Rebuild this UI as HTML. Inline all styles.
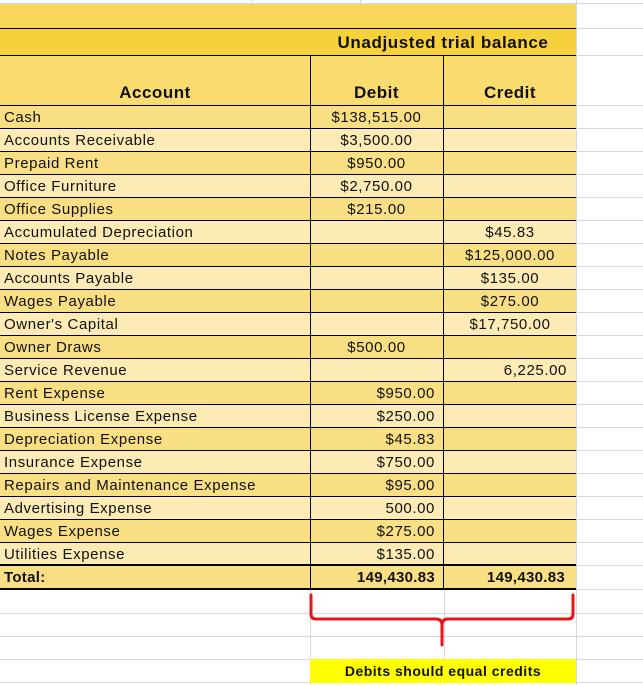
<!DOCTYPE html>
<html><head><style>
body{margin:0;width:643px;height:685px;position:relative;background:#fff;font-family:"Liberation Sans",sans-serif;overflow:hidden}
.g{position:absolute;background:#d9d9d9}
.r{position:absolute;left:0;width:576px;height:23px;font-size:15px;letter-spacing:0.6px;line-height:23px;color:#111;border-top:1px solid #000;box-sizing:border-box}
.r span{position:absolute;top:0;white-space:nowrap}
.a{left:4px}
.d{left:310px;width:133px;text-align:center}
.dr{left:310px;width:125px;text-align:right}
.c{left:444px;width:132px;text-align:center}
.cr{left:444px;width:123px;text-align:right}
.v{position:absolute;width:1px;background:#000}
</style></head><body>
<div class="g" style="left:0;top:3px;width:643px;height:1px"></div>
<div class="g" style="left:576px;top:28px;width:67px;height:1px"></div>
<div class="g" style="left:576px;top:55px;width:67px;height:1px"></div>
<div class="g" style="left:576px;top:105px;width:67px;height:1px"></div>
<div class="g" style="left:0;top:613px;width:643px;height:1px"></div>
<div class="g" style="left:0;top:636px;width:643px;height:1px"></div>
<div class="g" style="left:0;top:659px;width:643px;height:1px"></div>
<div class="g" style="left:0;top:682px;width:643px;height:1px"></div>
<div class="g" style="left:310px;top:589px;width:1px;height:96px"></div>
<div class="g" style="left:444px;top:589px;width:1px;height:96px"></div>
<div class="g" style="left:576px;top:0;width:1px;height:685px"></div>
<div class="g" style="left:251px;top:0;width:1px;height:3px"></div>
<div class="g" style="left:360px;top:0;width:1px;height:3px"></div>

<div style="position:absolute;left:0;top:4px;width:576px;height:24px;background:#f8d55b"></div>
<div style="position:absolute;left:0;top:28px;width:576px;height:27px;background:#f7d03d;border-top:1px solid #000;box-sizing:border-box"></div>
<div style="position:absolute;left:310px;top:29px;width:266px;height:26px;line-height:28px;text-align:center;font-weight:bold;font-size:17px;letter-spacing:0.6px;color:#111">Unadjusted trial balance</div>
<div style="position:absolute;left:0;top:55px;width:576px;height:50px;background:#f9db6e;border-top:1px solid #000;box-sizing:border-box;font-weight:bold;font-size:17px;letter-spacing:0.5px;color:#111">
<span style="position:absolute;left:0;width:310px;text-align:center;top:27px">Account</span>
<span style="position:absolute;left:310px;width:133px;text-align:center;top:27px">Debit</span>
<span style="position:absolute;left:444px;width:132px;text-align:center;top:27px">Credit</span>
</div>

<div class="r" style="top:105px;background:#f9df84"><span class="a">Cash</span><span class="d">$138,515.00</span></div>
<div class="r" style="top:128px;background:#fcebb4"><span class="a">Accounts Receivable</span><span class="d">$3,500.00</span></div>
<div class="r" style="top:151px;background:#f9df84"><span class="a">Prepaid Rent</span><span class="d">$950.00</span></div>
<div class="r" style="top:174px;background:#fcebb4"><span class="a">Office Furniture</span><span class="d">$2,750.00</span></div>
<div class="r" style="top:197px;background:#f9df84"><span class="a">Office Supplies</span><span class="d">$215.00</span></div>
<div class="r" style="top:220px;background:#fcebb4"><span class="a">Accumulated Depreciation</span><span class="c">$45.83</span></div>
<div class="r" style="top:243px;background:#f9df84"><span class="a">Notes Payable</span><span class="c">$125,000.00</span></div>
<div class="r" style="top:266px;background:#fcebb4"><span class="a">Accounts Payable</span><span class="c">$135.00</span></div>
<div class="r" style="top:289px;background:#f9df84"><span class="a">Wages Payable</span><span class="c">$275.00</span></div>
<div class="r" style="top:312px;background:#fcebb4"><span class="a">Owner's Capital</span><span class="c">$17,750.00</span></div>
<div class="r" style="top:335px;background:#f9df84"><span class="a">Owner Draws</span><span class="d">$500.00</span></div>
<div class="r" style="top:358px;background:#fcebb4"><span class="a">Service Revenue</span><span class="cr">6,225.00</span></div>
<div class="r" style="top:381px;background:#f9df84"><span class="a">Rent Expense</span><span class="dr">$950.00</span></div>
<div class="r" style="top:404px;background:#fcebb4"><span class="a">Business License Expense</span><span class="dr">$250.00</span></div>
<div class="r" style="top:427px;background:#f9df84"><span class="a">Depreciation Expense</span><span class="dr">$45.83</span></div>
<div class="r" style="top:450px;background:#fcebb4"><span class="a">Insurance Expense</span><span class="dr">$750.00</span></div>
<div class="r" style="top:473px;background:#f9df84"><span class="a">Repairs and Maintenance Expense</span><span class="dr">$95.00</span></div>
<div class="r" style="top:496px;background:#fcebb4"><span class="a">Advertising Expense</span><span class="dr">500.00</span></div>
<div class="r" style="top:519px;background:#f9df84"><span class="a">Wages Expense</span><span class="dr">$275.00</span></div>
<div class="r" style="top:542px;background:#fcebb4"><span class="a">Utilities Expense</span><span class="dr">$135.00</span></div>
<div class="r" style="top:564px;height:26px;background:#f9df84;border-top:2px solid #000;border-bottom:2px solid #000;font-weight:bold;letter-spacing:0.3px;line-height:23px"><span class="a">Total:</span><span class="dr">149,430.83</span><span class="cr" style="width:121px">149,430.83</span></div>

<div class="v" style="left:310px;top:55px;height:535px"></div>
<div class="v" style="left:443px;top:55px;height:535px"></div>

<svg style="position:absolute;left:300px;top:590px" width="290" height="60">
<path d="M11 5 V24 Q11 29 16 29 H136 Q142 29 142 35 V55 M142 35 Q142 29 148 29 H268 Q273 29 273 24 V5" fill="none" stroke="#e8141a" stroke-width="3" stroke-linecap="round"/>
</svg>
<div style="position:absolute;left:310px;top:659px;width:266px;height:24px;background:#ffff00;text-align:center;line-height:25px;font-weight:bold;font-size:14px;letter-spacing:0.5px;color:#111">Debits should equal credits</div>

<div class="g" style="left:576px;top:128px;width:67px;height:1px"></div>
<div class="g" style="left:576px;top:151px;width:67px;height:1px"></div>
<div class="g" style="left:576px;top:174px;width:67px;height:1px"></div>
<div class="g" style="left:576px;top:197px;width:67px;height:1px"></div>
<div class="g" style="left:576px;top:220px;width:67px;height:1px"></div>
<div class="g" style="left:576px;top:243px;width:67px;height:1px"></div>
<div class="g" style="left:576px;top:266px;width:67px;height:1px"></div>
<div class="g" style="left:576px;top:289px;width:67px;height:1px"></div>
<div class="g" style="left:576px;top:312px;width:67px;height:1px"></div>
<div class="g" style="left:576px;top:335px;width:67px;height:1px"></div>
<div class="g" style="left:576px;top:358px;width:67px;height:1px"></div>
<div class="g" style="left:576px;top:381px;width:67px;height:1px"></div>
<div class="g" style="left:576px;top:404px;width:67px;height:1px"></div>
<div class="g" style="left:576px;top:427px;width:67px;height:1px"></div>
<div class="g" style="left:576px;top:450px;width:67px;height:1px"></div>
<div class="g" style="left:576px;top:473px;width:67px;height:1px"></div>
<div class="g" style="left:576px;top:496px;width:67px;height:1px"></div>
<div class="g" style="left:576px;top:519px;width:67px;height:1px"></div>
<div class="g" style="left:576px;top:542px;width:67px;height:1px"></div>
<div class="g" style="left:576px;top:565px;width:67px;height:1px"></div>
<div class="g" style="left:576px;top:589px;width:67px;height:1px"></div>
</body></html>
